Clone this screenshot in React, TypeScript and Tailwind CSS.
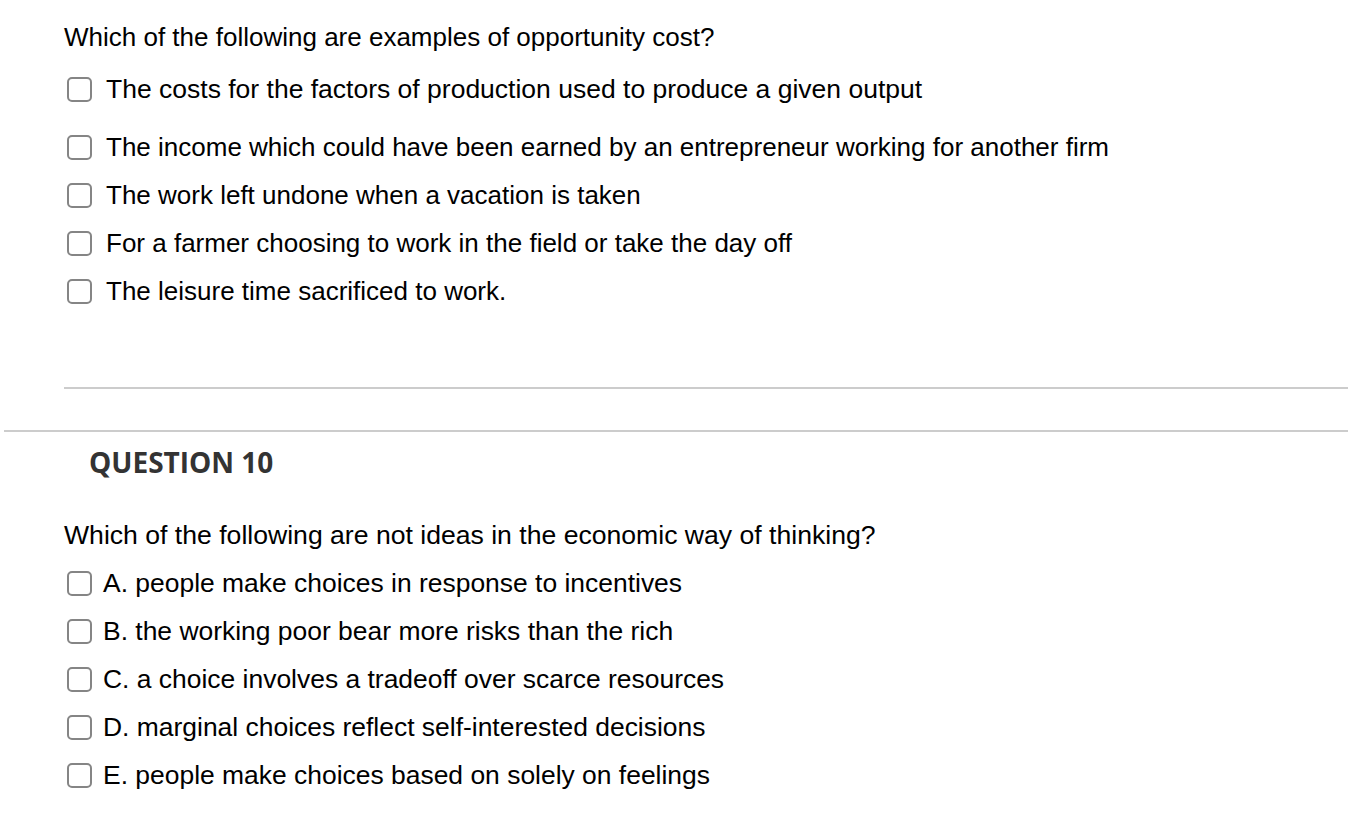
import React from "react";

const Box = () => (
  <span className="inline-block w-[25px] h-[25px] shrink-0 rounded-[5px] border-2 border-[#858585] bg-white" />
);

const Opt = ({ text, gap, mt = "", size = "text-[26px]" }: { text: string; gap: string; mt?: string; size?: string }) => (
  <div className={`flex items-center h-[48px] ml-[67px] ${mt}`}>
    <Box />
    <span className={`${gap} ${size} leading-none text-black whitespace-nowrap`}>{text}</span>
  </div>
);

export default function App() {
  const q9 = [
    "The income which could have been earned by an entrepreneur working for another firm",
    "The work left undone when a vacation is taken",
    "For a farmer choosing to work in the field or take the day off",
    "The leisure time sacrificed to work.",
  ];
  const q10 = [
    "A. people make choices in response to incentives",
    "B. the working poor bear more risks than the rich",
    "C. a choice involves a tradeoff over scarce resources",
    "D. marginal choices reflect self-interested decisions",
    "E. people make choices based on solely on feelings",
  ];
  return (
    <div
      className="w-[1348px] h-[830px] bg-white overflow-hidden pt-[13px] flex flex-col"
      style={{ fontFamily: '"Liberation Sans", Arial, sans-serif' }}
    >
      <div className="flex items-center h-[48px] ml-[64px] text-[26px] leading-none text-black whitespace-nowrap">
        Which of the following are examples of opportunity cost?
      </div>
      <Opt
        text="The costs for the factors of production used to produce a given output"
        gap="ml-[14px]"
        mt="mt-[4px]"
        size="text-[26.5px]"
      />
      <Opt text={q9[0]} gap="ml-[14px]" mt="mt-[10px]" />
      {q9.slice(1).map((t) => (
        <Opt key={t} text={t} gap="ml-[14px]" />
      ))}
      <div className="mt-[72px] ml-[64px] h-[2px] bg-[#cccccc]" />
      <div className="mt-[41px] ml-[4px] h-[2px] bg-[#cccccc]" />
      <div
        className="mt-[6px] h-[48px] flex items-center ml-[89px] text-[28px] font-bold text-[#333333] leading-none"
        style={{ fontFamily: '"Open Sans", sans-serif' }}
      >
        QUESTION 10
      </div>
      <div className="mt-[25px] flex items-center h-[48px] ml-[64px] text-[26.6px] leading-none text-black whitespace-nowrap">
        Which of the following are not ideas in the economic way of thinking?
      </div>
      {q10.map((t) => (
        <Opt key={t} text={t} gap="ml-[11px]" size="text-[26.45px]" />
      ))}
    </div>
  );
}
